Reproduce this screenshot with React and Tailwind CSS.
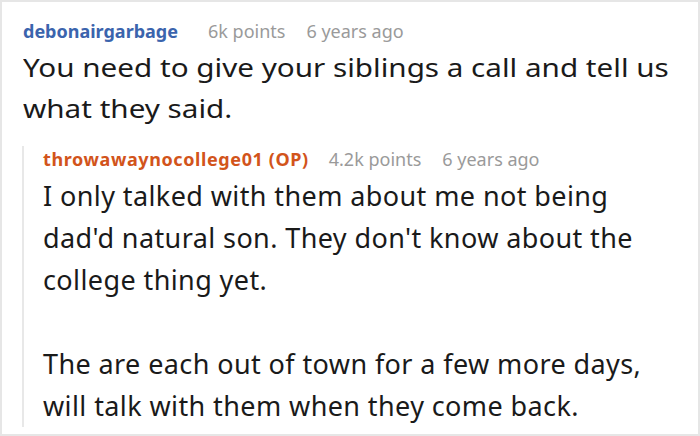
export default function App() {
  return (
    <div
      className="w-[700px] h-[436px] overflow-hidden bg-white border-2 border-[#e6e6e6] text-[#1a1a1a]"
      style={{ fontFamily: '"Noto Sans", "Open Sans", sans-serif' }}
    >
      <div className="pl-[21px] pt-[17px]">
        <div className="flex items-baseline text-[18px] leading-[24px]">
          <span className="font-bold text-[#3b64ad]">debonairgarbage</span>
          <span className="ml-[30px] text-[#9a9a9a]">6k points</span>
          <span className="ml-[21px] text-[#9a9a9a]">6 years ago</span>
        </div>
        <p className="w-[585px] origin-left scale-x-[1.14] text-[26px] leading-[41px] mt-[4px]">
          You need to give your siblings a call and tell us what they said.
        </p>

        <div className="mt-[17px] -ml-px border-l-2 border-[#e8e8e8] pl-[19px]">
          <div className="flex items-baseline text-[18px] leading-[24px] pt-[1px]">
            <span className="font-bold text-[#d2541b] tracking-[0.6px]">throwawaynocollege01 (OP)</span>
            <span className="ml-[20px] text-[#9a9a9a]">4.2k points</span>
            <span className="ml-[21px] text-[#9a9a9a]">6 years ago</span>
          </div>
          <div className="w-[620px] text-[27px] leading-[42px] tracking-[0.4px] mt-[4px]">
            <p>I only talked with them about me not being dad'd natural son. They don't know about the college thing yet.</p>
            <p className="mt-[42px]">The are each out of town for a few more days, will talk with them when they come back.</p>
          </div>
        </div>
      </div>
    </div>
  );
}
